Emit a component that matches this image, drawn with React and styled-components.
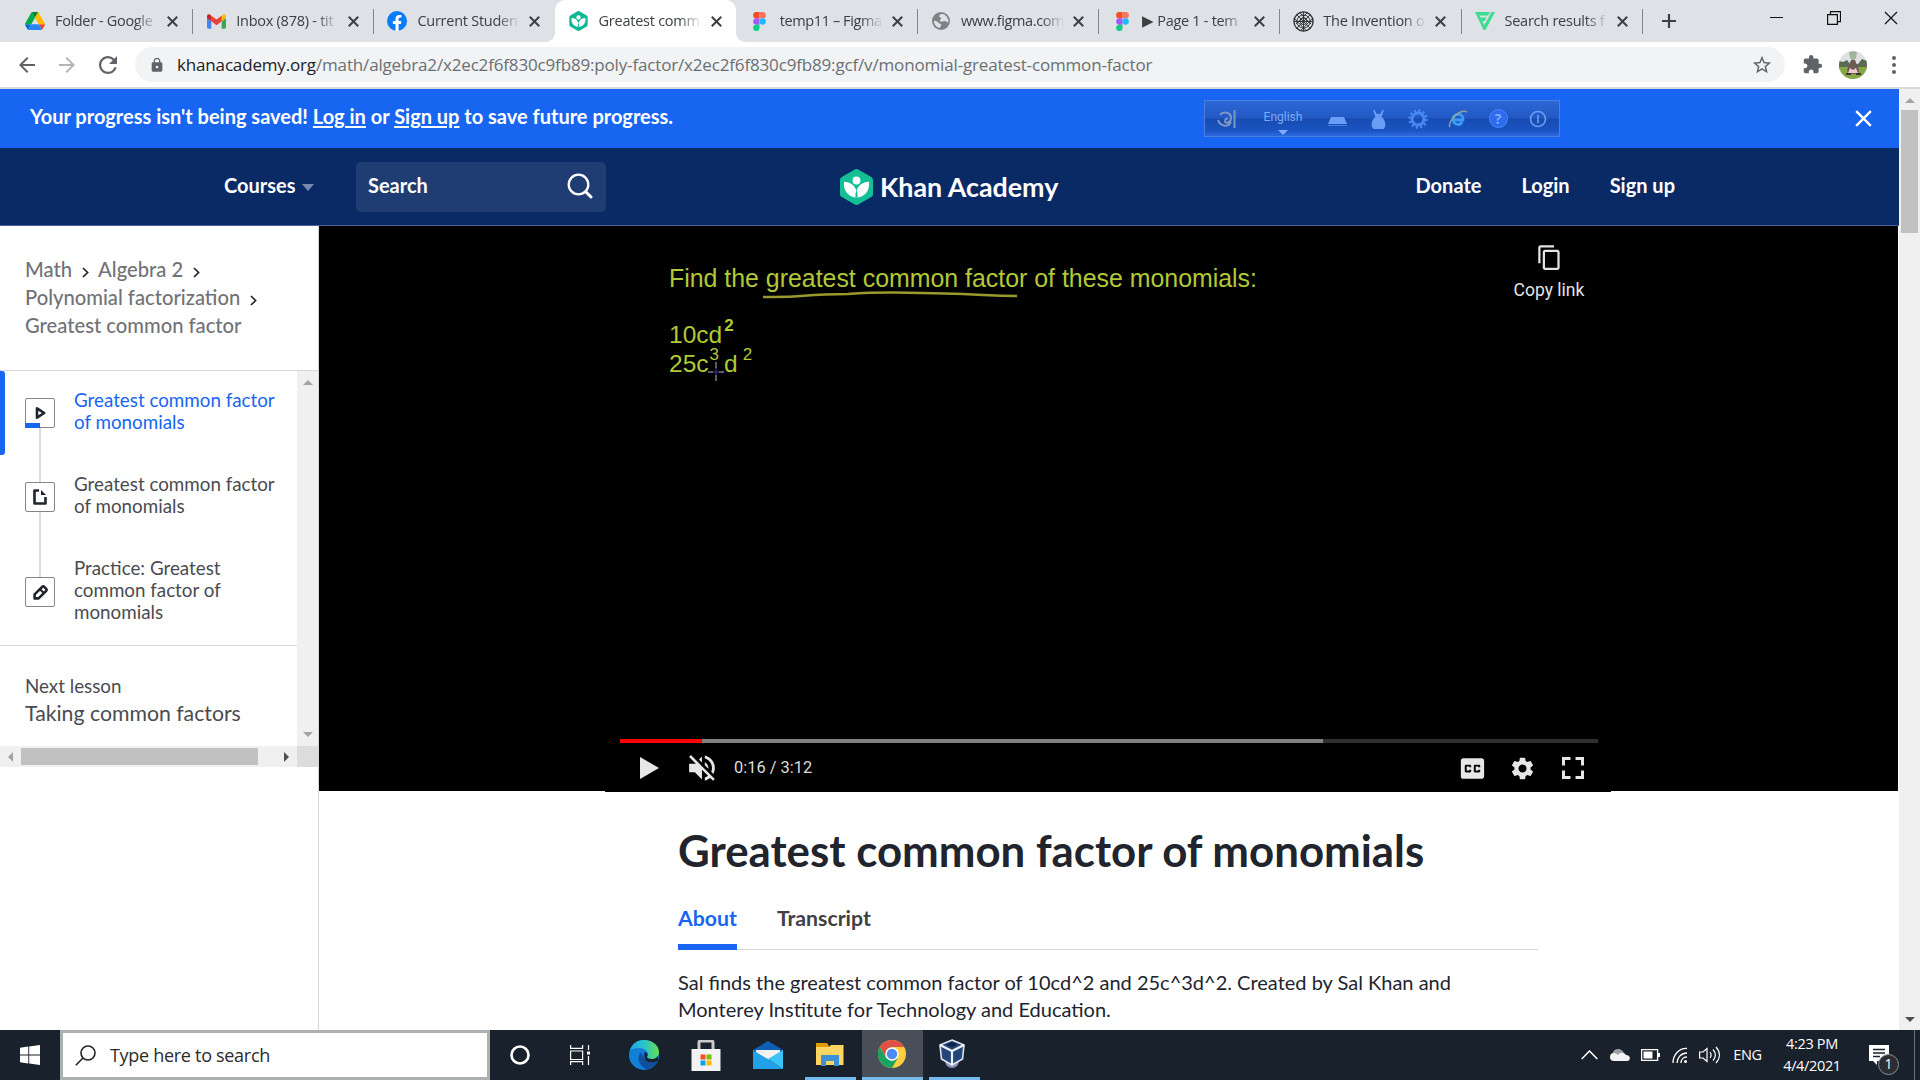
import React from "react";
import styled, { createGlobalStyle } from "styled-components";
import { MdStarBorder, MdExtension, MdOutlineContentCopy, MdClosedCaption, MdSettings, MdArrowBack, MdArrowForward, MdLock } from "react-icons/md";

const UI = '"Open Sans", "Noto Sans", sans-serif';
const LATO = 'Lato, "Open Sans", sans-serif';

const Global = createGlobalStyle`
  *, *::before, *::after { box-sizing: border-box; }
  html, body { margin: 0; padding: 0; background: #fff; }
  svg { display: block; flex: none; }
`;

const Screen = styled.div`
  width: 1920px;
  height: 1080px;
  display: flex;
  flex-direction: column;
  overflow: hidden;
  background: #fff;
  font-family: ${LATO};
  white-space: nowrap;
`;

/* ---------- browser ---------- */
const TabStrip = styled.div`
  height: 42px;
  flex: none;
  display: flex;
  background: #dee1e6;
  padding-left: 11px;
`;
const Tab = styled.div`
  width: 181.2px;
  height: 42px;
  padding: 0 14px 0 14px;
  display: flex;
  align-items: center;
  position: relative;
  background: ${(p) => (p.$active ? "#fff" : "transparent")};
  border-radius: ${(p) => (p.$active ? "10px 10px 0 0" : "0")};
  &::before {
    content: "";
    display: ${(p) => (p.$active ? "block" : "none")};
    position: absolute;
    left: -9px;
    right: -9px;
    bottom: 0;
    height: 9px;
    background:
      radial-gradient(circle at 0 0, transparent 8.5px, #fff 9px) left / 9px 9px no-repeat,
      radial-gradient(circle at 100% 0, transparent 8.5px, #fff 9px) right / 9px 9px no-repeat;
  }
  &::after {
    content: "";
    position: absolute;
    right: -1px;
    top: 9px;
    width: 1px;
    height: 25px;
    background: ${(p) => (p.$line ? "#80868b" : "transparent")};
  }
`;
const TabIcon = styled.div`
  width: 20px;
  height: 42px;
  display: flex;
  align-items: center;
  justify-content: center;
`;
const TabTitle = styled.div`
  width: 103px;
  margin: 0 9px 0 10px;
  overflow: hidden;
  font: 400 14.5px/42px ${UI};
  letter-spacing: ${(p) => p.$ls ?? -0.25}px;
  height: 42px;
  color: #3c4043;
  mask-image: linear-gradient(90deg, #000 78%, transparent 100%);
`;
const NewTab = styled.div`
  width: 54px;
  display: flex;
  align-items: center;
  justify-content: center;
`;
const WindowButtons = styled.div`
  margin-left: auto;
  padding: 11px 22px 0 0;
  display: flex;
  gap: 43px;
`;
const Toolbar = styled.div`
  height: 47px;
  flex: none;
  display: flex;
  align-items: center;
  border-bottom: 2px solid #d8dade;
  padding: 0 18px 0 15px;
  color: #5f6368;
`;
const NavIcons = styled.div`
  width: 120px;
  display: flex;
  gap: 16px;
`;
const ReloadBox = styled.div`
  padding: 3px 0 0 4px;
`;
const Omnibox = styled.div`
  width: 1650px;
  height: 35px;
  border-radius: 18px;
  background: #f1f3f4;
  display: flex;
  align-items: center;
  padding: 0 12px 0 14px;
`;
const Url = styled.div`
  flex: 1;
  margin-left: 12px;
  font: 400 17px/33px ${UI};
  letter-spacing: -0.16px;
  color: #6b6f73;
  b { font-weight: 400; color: #202124; }
`;
const Extensions = styled.div`
  margin-left: 17px;
`;
const Avatar = styled.div`
  width: 28px;
  height: 28px;
  border-radius: 50%;
  overflow: hidden;
  margin: 0 25px 0 16px;
`;

/* ---------- page ---------- */
const Viewport = styled.div`
  height: 941px;
  flex: none;
  display: flex;
`;
const Page = styled.div`
  width: 1899px;
  display: flex;
  flex-direction: column;
  overflow: hidden;
`;
const PageScroll = styled.div`
  width: 21px;
  background: #f0f0f0;
  display: flex;
  flex-direction: column;
  align-items: center;
  padding: 9px 0 8px;
`;
const PageThumb = styled.div`
  width: 17px;
  height: 123px;
  margin-top: 7px;
  background: #c1c1c1;
`;
const Arrow = styled.i`
  width: 0;
  height: 0;
  flex: none;
  border: 5px solid transparent;
  ${(p) => p.$dir === "up" && `border-top: 0; border-bottom-color: ${p.$c};`}
  ${(p) => p.$dir === "down" && `border-bottom: 0; border-top-color: ${p.$c};`}
  ${(p) => p.$dir === "left" && `border-left: 0; border-right-color: ${p.$c};`}
  ${(p) => p.$dir === "right" && `border-right: 0; border-left-color: ${p.$c};`}
  ${(p) => p.$push && "margin-top: auto;"}
`;
const Banner = styled.div`
  height: 59px;
  flex: none;
  background: #1865f2;
  color: #fff;
  display: flex;
  align-items: center;
  padding: 0 27px 0 30px;
`;
const BannerText = styled.div`
  width: 1174px;
  font: 700 20px/55px ${LATO};
  height: 59px;
  u { text-decoration-thickness: 2px; text-underline-offset: 2px; }
`;
const ImeBar = styled.div`
  width: 356px;
  height: 37px;
  margin-right: auto;
  border: 1px solid #4a7fe0;
  background: linear-gradient(#2b67d6 0%, #2259c4 48%, #164bb0 52%, #1b55c4 85%, #2b6ae0 100%);
  display: grid;
  grid-template-columns: 44px 68px 41px repeat(5, 40px);
  align-items: center;
  justify-items: center;
  color: #5f95f3;
`;
const ImeLang = styled.div`
  display: flex;
  flex-direction: column;
  align-items: center;
  gap: 3px;
  padding-top: 5px;
  font: 400 12px/20px Roboto, sans-serif;
  color: #7fabf8;
`;
const ImeHelp = styled.div`
  width: 19px;
  height: 19px;
  border-radius: 50%;
  background: #2c6bf0;
  border: 1px solid #4a86f5;
  color: #7eabf9;
  font: 700 14px/17px ${UI};
  text-align: center;
`;
const Header = styled.div`
  height: 78px;
  flex: none;
  background: #0a2a66;
  border-bottom: 1px solid #4a619b;
  display: flex;
  align-items: center;
  padding-left: 224px;
  color: #fff;
`;
const Courses = styled.div`
  width: 132px;
  display: flex;
  align-items: center;
  gap: 7px;
  margin-bottom: 4px;
  font: 700 20px/26px ${LATO};
`;
const Caret = styled.i`
  border: 6px solid transparent;
  border-top: 7px solid #7889ad;
  border-bottom: 0;
  margin-top: 6px;
`;
const SearchBox = styled.div`
  width: 250px;
  height: 50px;
  border-radius: 5px;
  background: #1f3c73;
  display: flex;
  align-items: center;
  justify-content: space-between;
  padding: 0 13px 4px 12px;
  font: 700 20px/26px ${LATO};
  svg { margin-top: 3px; }
`;
const Logo = styled.div`
  width: 220px;
  margin-left: 234px;
  display: flex;
  align-items: center;
  gap: 7px;
  font: 700 26.8px/36px ${LATO};
`;
const HeaderLinks = styled.nav`
  margin: 0 0 4px auto;
  padding-right: 224px;
  display: flex;
  gap: 40px;
  font: 700 20px/26px ${LATO};
`;
const Body = styled.div`
  flex: 1;
  display: flex;
  min-height: 0;
`;

/* ---------- sidebar ---------- */
const Sidebar = styled.aside`
  width: 319px;
  flex: none;
  border-right: 1px solid #d6d6d8;
  display: flex;
  flex-direction: column;
`;
const Crumbs = styled.div`
  height: 145px;
  flex: none;
  border-bottom: 1px solid #d6d6d8;
  padding: 29px 0 0 25px;
  font: 500 20.2px/28px ${LATO};
  color: #717278;
`;
const CrumbLine = styled.div`
  display: flex;
  align-items: center;
  height: 28px;
  svg { margin: 7px 9px 0 10px; }
`;
const ListFrame = styled.div`
  height: 375px;
  flex: none;
  display: flex;
`;
const List = styled.div`
  width: 297px;
`;
const VBar = styled.div`
  width: 21px;
  background: #f0f0f0;
  display: flex;
  flex-direction: column;
  align-items: center;
  padding: 9px 0;
`;
const HBar = styled.div`
  height: 21px;
  flex: none;
  display: flex;
  align-items: center;
  background: linear-gradient(90deg, #f0f0f0 297px, #dcdcdc 297px);
  padding-left: 8px;
`;
const HThumb = styled.div`
  width: 237px;
  height: 17px;
  background: #c1c1c1;
  margin: 0 26px 0 8px;
`;
const Lesson = styled.div`
  height: ${(p) => p.$h}px;
  display: flex;
  align-items: center;
  padding-left: 25px;
  position: relative;
  font: 400 18.8px/22px ${LATO};
  color: ${(p) => (p.$active ? "#1865f2" : "#4a4b50")};
  &::before {
    content: "";
    position: absolute;
    left: 0;
    top: 0;
    width: 5px;
    height: 84px;
    border-radius: 0 3px 3px 0;
    background: ${(p) => (p.$active ? "#1865f2" : "transparent")};
  }
  &::after {
    content: "";
    position: absolute;
    left: 39px;
    top: calc(50% + 15px);
    width: 2px;
    height: ${(p) => p.$link}px;
    background: #dcdcdd;
  }
`;
const LessonIcon = styled.div`
  width: 30px;
  height: 30px;
  border: 1px solid #85868b;
  border-radius: 2px;
  margin-right: 19px;
  display: flex;
  align-items: center;
  justify-content: center;
  position: relative;
  background: #fff;
`;
const Watched = styled.span`
  position: absolute;
  left: -1px;
  bottom: -1px;
  width: 15px;
  height: 5px;
  background: #1865f2;
`;
const LessonText = styled.div`
  padding-bottom: 4px;
`;
const NextLesson = styled.div`
  border-top: 1px solid #d6d6d8;
  padding: 28px 0 0 25px;
  color: #4a4b50;
  font: 400 18.8px/24px ${LATO};
  div { font-size: 21.25px; line-height: 30px; }
`;

/* ---------- main ---------- */
const Main = styled.main`
  flex: 1;
  display: flex;
  flex-direction: column;
`;
const Stage = styled.div`
  width: 1579px;
  height: 565px;
  flex: none;
  background: #000;
  padding-left: 286px;
`;
const Player = styled.div`
  width: 1006px;
  height: 566px;
  background: #000;
  display: flex;
  flex-direction: column;
  padding: 0 13px 0 15px;
  position: relative;
`;
const Board = styled.div`
  height: 513px;
  flex: none;
  padding: 39px 0 0 49px;
  color: #b1c936;
  font: 400 24.9px/26px "Liberation Sans", Arial, sans-serif;
`;
const Underline = styled.svg`
  margin: 0 0 0 94px;
`;
const Term = styled.div`
  display: flex;
  height: 29px;
  font-size: 24.5px;
  line-height: 29px;
  margin-top: ${(p) => p.$top || 0}px;
  sup { font-size: 17px; font-weight: ${(p) => (p.$bold ? 700 : 400)}; line-height: 12px; margin: 0 5px 0 1px; }
  sup + sup, span { margin-left: 0; }
  sup:last-child { margin-left: ${(p) => p.$gap || 2}px; }
`;
const Crosshair = styled.svg`
  position: absolute;
  left: 102px;
  top: 136px;
`;
const CopyLink = styled.div`
  position: absolute;
  left: 900px;
  top: 18px;
  width: 88px;
  display: flex;
  flex-direction: column;
  align-items: center;
  gap: 8px;
  color: #e4e4e4;
  font: 400 17.5px/22px Roboto, sans-serif;
`;
const Track = styled.div`
  height: 4px;
  flex: none;
  background: linear-gradient(90deg, #f00 82px, #808080 82px, #808080 703px, #303030 703px);
`;
const Controls = styled.div`
  height: 49px;
  display: flex;
  align-items: center;
  padding: 1px 14px 0 20px;
  color: #e6e6e6;
  font: 400 16.4px/24px Roboto, sans-serif;
`;
const MuteBox = styled.div`
  margin-left: 30px;
`;
const GearBox = styled.div`
  margin: 0 26px 0 21px;
`;
const Time = styled.span`
  margin: 0 auto 0 19px;
  color: #ddd;
`;
const Article = styled.div`
  width: 860px;
  margin: 29px 0 0 359px;
  color: #21242c;
`;
const Title = styled.h1`
  margin: 0;
  font: 700 43.8px/60px ${LATO};
`;
const Tabs = styled.div`
  display: flex;
  gap: 40px;
  height: 62px;
  margin-top: 8px;
  align-items: flex-end;
  border-bottom: 1px solid #d6d6d8;
`;
const PageTab = styled.div`
  height: 48px;
  margin-bottom: -1px;
  font: 700 21.25px/26px ${LATO};
  padding-top: 3px;
  color: ${(p) => (p.$active ? "#1865f2" : "#3f4046")};
  border-bottom: 6px solid ${(p) => (p.$active ? "#1865f2" : "transparent")};
`;
const Copy = styled.p`
  margin: 19px 0 0;
  font: 400 20px/27px ${LATO};
`;

/* ---------- taskbar ---------- */
const Taskbar = styled.div`
  height: 50px;
  flex: none;
  display: flex;
  background: #19212c;
  color: #fff;
`;
const Slot = styled.div`
  width: ${(p) => p.$w}px;
  height: 50px;
  flex: none;
  display: flex;
  align-items: center;
  justify-content: center;
  margin-right: ${(p) => p.$mr || 0}px;
  padding-right: ${(p) => p.$pr || 0}px;
  background: ${(p) => (p.$on ? "#484f58" : "transparent")};
  border-bottom: ${(p) => (p.$open ? "3px solid #76b9ed" : "0 solid")};
`;
const TaskSearch = styled.div`
  width: 430px;
  height: 50px;
  border: 3px solid #adb0b0;
  background: #fff;
  color: #2b2b2b;
  display: flex;
  align-items: center;
  gap: 14px;
  padding-left: 12px;
  font: 400 18px/24px ${UI};
  letter-spacing: -0.3px;
`;
const Tray = styled.div`
  margin-left: auto;
  display: flex;
  align-items: center;
  padding-right: 5px;
`;
const TrayItem = styled.div`
  margin-right: ${(p) => p.$mr}px;
`;
const TrayText = styled.div`
  width: ${(p) => p.$w}px;
  margin-right: ${(p) => p.$mr}px;
  text-align: center;
  font: 400 14.5px/22px ${UI};
  letter-spacing: -0.35px;
`;
const Lines = styled.div`
  display: flex;
  flex-direction: column;
`;
const Notice = styled.div`
  position: relative;
  width: 30px;
  height: 20px;
`;
const Badge = styled.span`
  position: absolute;
  left: 9px;
  top: 9px;
  width: 21px;
  height: 21px;
  border-radius: 50%;
  border: 1px solid #8d9094;
  background: #2b2d30;
  font: 400 14px/18px ${UI};
  text-align: center;
`;
const ShowDesktop = styled.div`
  width: 1px;
  height: 50px;
  background: #6b7078;
`;

/* ---------- drawings ---------- */
const Cross = ({ s = 10, w = 2, c = "#3c4043" }) => (
  <svg width={s} height={s} viewBox="0 0 10 10"><path d="M.7.7l8.6 8.6M9.3.7L.7 9.3" stroke={c} strokeWidth={(w * 10) / s} /></svg>
);
const KhanMark = ({ w, h, c = "#14bf96" }) => (
  <svg width={w} height={h} viewBox="0 0 33 36">
    <path d="M14.8.6a3.4 3.4 0 0 1 3.4 0L31.3 8.1a3.4 3.4 0 0 1 1.7 3v14a3.4 3.4 0 0 1-1.7 3L18.2 35.5a3.4 3.4 0 0 1-3.4 0L1.7 28.1a3.4 3.4 0 0 1-1.7-3v-14a3.4 3.4 0 0 1 1.7-3z" fill={c} />
    <circle cx="16.5" cy="11.5" r="3.9" fill="#fff" />
    <path d="M29 12.8v3c0 7.2-5.5 12.7-12.5 12.7S4 23 4 15.8v-3c6 0 10.8 3.5 12.5 9.2 1.7-5.7 6.500-9.200 12.500-9.200z" fill="#fff" />
    <path d="M16.500 21c-.9 2.200-1.200 4.600-1 7.500h2c.2-2.900-.1-5.300-1-7.500z" fill={c} />
  </svg>
);
const Drive = () => (
  <svg width="20" height="18" viewBox="0 0 87.3 78">
    <path d="m6.600 66.850 3.850 6.650c.8 1.400 1.950 2.500 3.300 3.300l13.750-23.800h-27.500c0 1.550.4 3.100 1.200 4.500z" fill="#0066da" />
    <path d="m43.650 25-13.750-23.800c-1.350.8-2.500 1.900-3.300 3.300l-25.400 44a9.060 9.060 0 0 0-1.200 4.500h27.500z" fill="#00ac47" />
    <path d="m73.550 76.800c1.350-.8 2.500-1.900 3.300-3.300l1.600-2.750 7.650-13.250c.8-1.400 1.200-2.950 1.200-4.500h-27.500l5.850 11.500z" fill="#ea4335" />
    <path d="m43.650 25 13.750-23.800c-1.350-.8-2.900-1.200-4.500-1.200h-18.500c-1.600 0-3.150.45-4.500 1.200z" fill="#00832d" />
    <path d="m59.800 53h-32.300l-13.750 23.800c1.350.8 2.900 1.200 4.500 1.200h50.800c1.600 0 3.150-.45 4.500-1.200z" fill="#2684fc" />
    <path d="m73.400 26.500-12.700-22c-.8-1.400-1.950-2.500-3.300-3.300l-13.750 23.800 16.150 28h27.450c0-1.550-.4-3.100-1.200-4.500z" fill="#ffba00" />
  </svg>
);
const Gmail = () => (
  <svg width="19" height="15" viewBox="52 42 88 66">
    <path fill="#4285f4" d="M58 108h14V74L52 59v43c0 3.320 2.690 6 6 6" />
    <path fill="#34a853" d="M120 108h14c3.320 0 6-2.690 6-6V59l-20 15" />
    <path fill="#fbbc04" d="M120 48v26l20-15v-8c0-7.420-8.470-11.650-14.400-7.200" />
    <path fill="#ea4335" d="M72 74V48l24 18 24-18v26L96 92" />
    <path fill="#c5221f" d="M52 51v8l20 15V48l-5.600-4.200c-5.940-4.450-14.400-.22-14.400 7.200" />
  </svg>
);
const Facebook = () => (
  <svg width="20" height="20" viewBox="0 0 24 24">
    <circle cx="12" cy="12" r="12" fill="#0a7cf5" />
    <path d="M16.700 15.500l.5-3.500h-3.300V9.800c0-1 .5-1.900 2-1.900h1.500v-3s-1.400-.2-2.700-.2c-2.700 0-4.500 1.700-4.500 4.700V12H7.100v3.500h3.100V24h3.700v-8.500z" fill="#fff" />
  </svg>
);
const Figma = () => (
  <svg width="13" height="19" viewBox="0 0 12 18">
    <path d="M3 0h3v6H3a3 3 0 0 1 0-6z" fill="#f24e1e" /><path d="M6 0h3a3 3 0 0 1 0 6H6z" fill="#ff7262" />
    <path d="M3 6h3v6H3a3 3 0 0 1 0-6z" fill="#a259ff" /><circle cx="9" cy="9" r="3" fill="#1abcfe" />
    <path d="M3 12h3v3a3 3 0 1 1-3-3z" fill="#0acf83" />
  </svg>
);
const Globe = () => (
  <svg width="18" height="18" viewBox="0 0 18 18">
    <circle cx="9" cy="9" r="9" fill="#7f8184" />
    <path d="M9.500 1.800c-1 1-2.500 1-2.300 2.600.2 1.200 2.200.8 2 2.200-.1 1.200-1.600 1-1.500 2.200.1 1 1.600.5 2.600.7 1.400.3 2.200-.8 3.400-.3.900.4 1.600 1.300 2.500 1.300A7.400 7.400 0 0 0 9.500 1.800z" fill="#dee1e6" />
    <path d="M1.800 8.800c1.700.1 3.500.4 4.300 1.600.7 1.100 2.500.8 3 2 .4 1.200-.9 1.700-1.200 3.700A7.300 7.300 0 0 1 1.800 8.800z" fill="#dee1e6" />
  </svg>
);
const Lattice = () => (
  <svg width="21" height="21" viewBox="0 0 21 21" fill="none" stroke="#2d2f31">
    <circle cx="10.500" cy="10.500" r="9.600" strokeWidth="1.300" />
    <g strokeWidth=".9"><path d="M10.500 1v19M1 10.500h19M3.800 3.800l13.400 13.400M17.200 3.800L3.800 17.200M6.800 1.700l11.400 11.400M14.200 1.700L2.800 13.100M1.700 7.800l11 11.200M19.300 7.800l-11 11.200" /><circle cx="10.500" cy="10.500" r="6.600" /><circle cx="10.500" cy="10.500" r="3.200" /></g>
  </svg>
);
const GreenTri = () => (
  <svg width="20" height="18" viewBox="0 0 20 18" fill="#3ddc91">
    <path d="M0 0h15l-2 3.500H4.500l1 2h6L9.800 9H7.300l2 4L16.500 0H20L10.500 18H8.500z" />
  </svg>
);
const Reload = () => (
  <svg width="18" height="18" viewBox="4 4 16 16"><path fill="#5f6368" d="M17.650 6.350A7.958 7.958 0 0 0 12 4c-4.420 0-7.990 3.580-7.990 8s3.570 8 7.990 8c3.730 0 6.840-2.550 7.730-6h-2.080A5.990 5.990 0 0 1 12 18c-3.310 0-6-2.690-6-6s2.690-6 6-6c1.660 0 3.140.69 4.220 1.780L13 11h7V4z" /></svg>
);
const HikerPhoto = () => (
  <svg width="28" height="28" viewBox="0 0 28 28">
    <rect width="28" height="28" fill="#dde1e4" /><path d="M0 10l4 1 4-2 3 4h8l4-5 5 2v8H0z" fill="#5b6a55" />
    <path d="M10 1l4-1 4 1-1 6-3 3-3-3z" fill="#a3b39d" /><path d="M0 16h28v12H0z" fill="#86a743" />
    <path d="M12 9h4l4 10-1 4H9l-1-4z" fill="#6d5a55" /><path d="M11 17l3 2 3-2 2 5H9z" fill="#ecc9cd" /><path d="M7 22h5v2H7zM17 22h5v2h-5z" fill="#3a3434" />
  </svg>
);
const Magnifier = () => (
  <svg width="26" height="26" viewBox="0 0 26 26" fill="none" stroke="#fff" strokeLinecap="round">
    <circle cx="11.500" cy="11.500" r="9.800" strokeWidth="2.300" /><path d="M19 19l5 5" strokeWidth="3" />
  </svg>
);
const Chevron = () => (
  <svg width="7" height="11" viewBox="0 0 7 11" fill="none" stroke="#21242c" strokeWidth="1.700"><path d="M1 1l4.600 4.500L1 10" /></svg>
);
const PlayMini = () => (
  <svg width="14" height="14" viewBox="-2 0 14 14" fill="none"><path d="M2 2.300v9.400L9.200 7z" stroke="#21242c" strokeWidth="2.600" strokeLinejoin="round" /></svg>
);
const DocMini = () => (
  <svg width="14" height="16" viewBox="0 0 14 16" fill="none"><path d="M6 1.500H1.500v13h11V8" stroke="#21242c" strokeWidth="2.600" strokeLinejoin="round" /><path d="M8 1l5 5H8z" fill="#21242c" /></svg>
);
const PencilMini = () => (
  <svg width="15" height="15" viewBox="0 0 15 15" fill="none"><path d="M1.600 13.400v-4L9.200 1.800q1-.8 2 0l2 2q.8 1 0 2L5.600 13.400z" stroke="#21242c" strokeWidth="2.600" strokeLinejoin="round" /><path d="M7 4.200l4 4" stroke="#21242c" strokeWidth="2.200" /></svg>
);
const Muted = () => (
  <svg width="26" height="26" viewBox="7.9 8.9 18.2 18.2" fill="#e6e6e6"><path d="m 21.480,17.980 c 0,-1.770 -1.020,-3.290 -2.500,-4.030 v 2.210 l 2.450,2.450 c .03,-0.200 .05,-0.410 .05,-0.630 z m 2.500,0 c 0,.94 -0.200,1.820 -0.540,2.640 l 1.510,1.510 c .66,-1.240 1.030,-2.650 1.030,-4.150 0,-4.280 -2.990,-7.860 -7,-8.760 v 2.050 c 2.890,.86 5,3.540 5,6.710 z M 9.250,8.980 l -1.270,1.260 4.720,4.730 H 7.980 v 6 H 11.980 l 5,5 v -6.730 l 4.250,4.250 c -0.670,.52 -1.420,.93 -2.250,1.180 v 2.060 c 1.380,-0.310 2.630,-0.950 3.690,-1.810 l 2.040,2.050 1.270,-1.270 -9,-9 -7.720,-7.720 z m 7.720,.99 -2.090,2.080 2.090,2.090 V 9.980 z" /></svg>
);
const PlayBig = () => (<svg width="19" height="22" viewBox="0 0 19 22"><path d="M0 0l19 11L0 22z" fill="#e6e6e6" /></svg>);
const Fullscreen = () => (
  <svg width="22" height="22" viewBox="0 0 22 22" fill="none" stroke="#e6e6e6" strokeWidth="3"><path d="M1.500 8.500v-7h7M13.500 1.500h7v7M20.500 13.500v7h-7M8.500 20.500h-7v-7" /></svg>
);

const tabs = [
  { icon: <Drive />, title: "Folder - Google", line: 1, ls: -0.35 },
  { icon: <Gmail />, title: "Inbox (878) - tit", line: 1 },
  { icon: <Facebook />, title: "Current Studen" },
  { icon: <KhanMark w={19} h={20} c="#0fb893" />, title: "Greatest comm", active: 1 },
  { icon: <Figma />, title: "temp11 – Figma", line: 1, ls: -0.4 },
  { icon: <Globe />, title: "www.figma.com", line: 1, ls: -0.4 },
  { icon: <Figma />, title: "▶ Page 1 - tem", line: 1, ls: -0.3 },
  { icon: <Lattice />, title: "The Invention o", line: 1 },
  { icon: <GreenTri />, title: "Search results f", line: 1 },
];

function Browser() {
  return (
    <>
      <TabStrip>
        {tabs.map((t, i) => (
          <Tab key={i} $active={t.active} $line={t.line}>
            <TabIcon>{t.icon}</TabIcon>
            <TabTitle $ls={t.ls}>{t.title}</TabTitle>
            <Cross s={11} w={2} />
          </Tab>
        ))}
        <NewTab><svg width="16" height="16" viewBox="0 0 16 16"><path d="M8 1v14M1 8h14" stroke="#3c4043" strokeWidth="2.200" /></svg></NewTab>
        <WindowButtons>
          <svg width="14" height="14" viewBox="0 0 14 14"><path d="M0 6.500h13" stroke="#111" /></svg>
          <svg width="14" height="14" viewBox="0 0 14 14" fill="none" stroke="#111" strokeWidth="1.200"><path d="M.6 3.600h9.800v9.800H.6zM3.500 3.500V.6h10v10h-3" /></svg>
          <Cross s={14} w={1.2} c="#111" />
        </WindowButtons>
      </TabStrip>
      <Toolbar>
        <NavIcons>
          <MdArrowBack size={24} />
          <MdArrowForward size={24} color="#b4b6b9" />
          <ReloadBox><Reload /></ReloadBox>
        </NavIcons>
        <Omnibox>
          <MdLock size={16} />
          <Url><b>khanacademy.org</b>/math/algebra2/x2ec2f6f830c9fb89:poly-factor/x2ec2f6f830c9fb89:gcf/v/monomial-greatest-common-factor</Url>
          <MdStarBorder size={22} />
        </Omnibox>
        <Extensions><MdExtension size={21} /></Extensions>
        <Avatar><HikerPhoto /></Avatar>
        <svg width="4" height="18" viewBox="0 0 4 18" fill="#5f6368"><circle cx="2" cy="2" r="2" /><circle cx="2" cy="9" r="2" /><circle cx="2" cy="16" r="2" /></svg>
      </Toolbar>
    </>
  );
}

function Ime() {
  return (
    <ImeBar>
      <svg width="20" height="20" viewBox="0 0 20 20" fill="none" stroke="#7d97c4" strokeWidth="2"><path d="M17.500 1v18M3 6c3-4 11-3 11 3 0 5-6 6-6 3 0-2 2-3 3-2M1 11c2 6 10 8 13 2" /></svg>
      <ImeLang>English<Arrow $dir="down" $c="#7fabf8" /></ImeLang>
      <svg width="19" height="20" viewBox="0 0 19 20" fill="#6a9df5"><path d="M3 8h13l3 7H0z" /><path d="M0 16h19v1H0z" opacity=".6" /></svg>
      <svg width="15" height="20" viewBox="0 0 15 20" fill="#6a9df5"><path d="M2 1h1.500l2.300 4h3.400l2.300-4H13l-2.500 7c3 2 4.500 6 3.500 10l-1.500 2h-10L1 18c-1-4 .5-8 3.500-10z" /></svg>
      <svg width="20" height="20" viewBox="0 0 20 20" fill="none" stroke="#4788f4"><circle cx="10" cy="10" r="6" strokeWidth="3" /><circle cx="10" cy="10" r="8.500" strokeWidth="2.500" strokeDasharray="2.200 2.250" /></svg>
      <svg width="20" height="20" viewBox="0 0 20 20" fill="none"><path d="M5 11h10c1-7-9-8-10-1 0 6 7 7 9 3" stroke="#3c9bf7" strokeWidth="2.800" /><path d="M2 18C-1 13 12-1 19 3" stroke="#8fa694" strokeWidth="1.500" /></svg>
      <ImeHelp>?</ImeHelp>
      <svg width="18" height="18" viewBox="0 0 18 18" fill="none" stroke="#6f9ff2" strokeWidth="1.600"><circle cx="9" cy="9" r="7.500" /><path d="M9 5v8" /></svg>
    </ImeBar>
  );
}

function SidePanel() {
  return (
    <Sidebar>
      <Crumbs>
        <CrumbLine>Math<Chevron />Algebra 2<Chevron /></CrumbLine>
        <CrumbLine>Polynomial factorization<Chevron /></CrumbLine>
        <CrumbLine>Greatest common factor</CrumbLine>
      </Crumbs>
      <ListFrame>
        <List>
          <Lesson $h={84} $link={54} $active><LessonIcon><PlayMini /><Watched /></LessonIcon><LessonText>Greatest common factor<br />of monomials</LessonText></Lesson>
          <Lesson $h={84} $link={65}><LessonIcon><DocMini /></LessonIcon><LessonText>Greatest common factor<br />of monomials</LessonText></Lesson>
          <Lesson $h={106} $link={0}><LessonIcon><PencilMini /></LessonIcon><LessonText>Practice: Greatest<br />common factor of<br />monomials</LessonText></Lesson>
          <NextLesson>Next lesson<div>Taking common factors</div></NextLesson>
        </List>
        <VBar><Arrow $dir="up" $c="#a3a3a3" /><Arrow $dir="down" $c="#a3a3a3" $push /></VBar>
      </ListFrame>
      <HBar><Arrow $dir="left" $c="#a3a3a3" /><HThumb /><Arrow $dir="right" $c="#505050" /></HBar>
    </Sidebar>
  );
}

function Video() {
  return (
    <Stage>
      <Player>
        <Board>
          Find the greatest common factor of these monomials:
          <Underline width="254" height="8" viewBox="0 0 254 8" fill="none"><path d="M0 6c45 1 35-3 85-3 45-3 55-1 115 0 25 1 30 2 54 2" stroke="#9a9a2c" strokeWidth="2.500" /></Underline>
          <Term $top={21} $bold>10cd<sup>2</sup></Term>
          <Term $gap={5}>25c<sup>3</sup><span>d</span><sup>2</sup></Term>
          <Crosshair width="18" height="20" viewBox="0 0 18 20" stroke="#77798a" strokeWidth="1.500"><path d="M9 0v6M9 13v6M1 10h5M12 10h5" /><path d="M9 6v7M6 10h6" stroke="#2c2a6a" /></Crosshair>
        </Board>
        <CopyLink><MdOutlineContentCopy size={27} />Copy link</CopyLink>
        <Track />
        <Controls>
          <PlayBig />
          <MuteBox><Muted /></MuteBox>
          <Time>0:16 / 3:12</Time>
          <MdClosedCaption size={31} />
          <GearBox><MdSettings size={27} /></GearBox>
          <Fullscreen />
        </Controls>
      </Player>
    </Stage>
  );
}

function TaskIcons() {
  return (
    <>
      <Slot $w={60}><svg width="20" height="20" viewBox="0 0 20 20" fill="#fff"><path d="M0 2.800L8.300 1.600v8H0zM9.200 1.500L20 0v9.600H9.200zM0 10.400h8.300v8L0 17.200zM9.200 10.400H20V20L9.200 18.500z" /></svg></Slot>
      <TaskSearch>
        <svg width="21" height="21" viewBox="0 0 21 21" fill="none" stroke="#222" strokeWidth="1.600"><circle cx="13" cy="8" r="7" /><path d="M8 13L.8 20.200" /></svg>
        Type here to search
      </TaskSearch>
      <Slot $w={60}><svg width="20" height="20" viewBox="0 0 20 20"><circle cx="10" cy="10" r="8.500" fill="none" stroke="#fff" strokeWidth="2.600" /></svg></Slot>
      <Slot $w={60} $mr={4}><svg width="20" height="20" viewBox="0 0 20 20" fill="none" stroke="#fff" strokeWidth="1.200"><path d="M.6 0v3.400h12V0M.6 6h12v8.500H.6zM.6 20v-3.400h12V20M18.500 0v5M18.500 11v9" /><path d="M17 6.500h3v3h-3z" fill="#fff" stroke="none" /></svg></Slot>
      <Slot $w={60} $mr={2}>
        <svg width="30" height="30" viewBox="0 0 30 30">
          <defs>
            <linearGradient id="edgeTop" x1="0" x2="1"><stop offset="0" stopColor="#1fa7e8" /><stop offset=".5" stopColor="#2cc4c9" /><stop offset="1" stopColor="#63e04b" /></linearGradient>
          </defs>
          <circle cx="15" cy="15" r="15" fill="#1180d6" />
          <path d="M1 10C4 2 10 0 15 0c9 0 15 6 15 12 0 5-4 7-7 7-3 0-5-1-5-2 0-1 1-1 1-3 0-3-4-6-9-6-4 0-7 1-9 2z" fill="url(#edgeTop)" />
          <path d="M12 12c-5 5-2 15 6 17 5-1 9-5 11-8-5 3-10 2-13-1-2-2-3-5-4-8z" fill="#0f4f9e" />
          <path d="M16 12c3 1 3 3 2 5 0 1 2 2 5 2 2 0 4-.5 6-3v5c-4 3-10 2-13-1-2-2-2-6 0-8z" fill="#19212c" />
          <path d="M16 12c-2 2-2 6 0 8 3 3 8 3 12 1 .5 0 .5.5.3.8C26 26 21 29 17 28z" fill="#0f4f9e" />
        </svg>
      </Slot>
      <Slot $w={60} $mr={2} $pr={1}>
        <svg width="30" height="31" viewBox="0 0 30 31"><path d="M8 10V2.500q0-1.500 1.500-1.500h11q1.500 0 1.500 1.500V10" fill="none" stroke="#c9c9c9" strokeWidth="3" /><path d="M.5 9h29v22h-29z" fill="#f3f3f3" /><path d="M9.500 14.500h5v5h-5z" fill="#f25022" /><path d="M15.500 14.500h5v5h-5z" fill="#7fba00" /><path d="M9.500 20.500h5v5h-5z" fill="#00a4ef" /><path d="M15.500 20.500h5v5h-5z" fill="#ffb900" /></svg>
      </Slot>
      <Slot $w={60} $mr={7}>
        <svg width="30" height="28" viewBox="0 0 30 28"><path d="M0 9L15 0l15 9v4H0z" fill="#0c5fb2" /><path d="M3 9h24v10H3z" fill="#f4f2f0" /><path d="M0 9l15 10L30 28H0z" fill="#1a9be6" /><path d="M30 9L15 18l15 10z" fill="#3cc4f5" /><path d="M0 28V10l15 8 15 10z" fill="#22a1e8" /></svg>
      </Slot>
      <Slot $w={51} $mr={6} $pr={1} $open>
        <svg width="28" height="24" viewBox="0 0 28 24"><path d="M0 1h11l2 3v3H0z" fill="#e09b00" /><path d="M0 5h13l2-2h12.500v20H0z" fill="#ffd562" /><path d="M5 24V13h18v11h-5v-5h-8v5z" fill="#3d92d6" /></svg>
      </Slot>
      <Slot $w={61} $mr={6} $pr={2} $open $on>
        <svg width="28" height="28" viewBox="0 0 48 48">
          <circle cx="24" cy="24" r="24" fill="#ffcd40" /><path d="M3.200 12A24 24 0 0 1 44.800 12H24L13.600 30z" fill="#de5246" />
          <path d="M3.200 12A24 24 0 0 0 24 48l10.400-18L24 36l-10.400-6z" fill="#1aa260" />
          <circle cx="24" cy="24" r="11.500" fill="#fff" /><circle cx="24" cy="24" r="9" fill="#4c8bf5" />
        </svg>
      </Slot>
      <Slot $w={51} $pr={6} $open>
        <svg width="26" height="30" viewBox="0 0 26 30"><path d="M6 21c0 5 3 8 7 8s7-3 7-8z" fill="#8a93b8" /><path d="M13 1l12 5-1.500 14L13 26 2.500 20 1 6z" fill="#24467a" stroke="#dfe5ee" strokeWidth="1.600" /><path d="M1 6l12 6 12-6M13 12v14" stroke="#eef2f7" strokeWidth="2.200" fill="none" /><path d="M7 5.500L13 3l6 2.500L13 8.500z" fill="#0f2344" /></svg>
      </Slot>
    </>
  );
}

function SystemTray() {
  return (
    <Tray>
      <TrayItem $mr={12}><svg width="17" height="10" viewBox="0 0 17 10" fill="none" stroke="#fff" strokeWidth="1.500"><path d="M.7 9l7.800-8 7.800 8" /></svg></TrayItem>
      <TrayItem $mr={11}><svg width="20" height="14" viewBox="0 0 20 14"><path d="M3 8a5 5 0 0 1 5-7c3 0 5 2 6 4l-6 6z" fill="#9a9ea4" /><path d="M4 13a4 4 0 0 1 0-8c2 0 3 1 4 2 2-3 6-3 8 0 5 0 5 6 1 6z" fill="#f2f2f2" /></svg></TrayItem>
      <TrayItem $mr={12}><svg width="19" height="12" viewBox="0 0 19 12"><path d="M.6.6h16v10.800H.6z" fill="none" stroke="#fff" strokeWidth="1.300" /><path d="M2.500 2.500h9v7h-9zM17 4h2v4h-2z" fill="#fff" /></svg></TrayItem>
      <TrayItem $mr={11}><svg width="16" height="17" viewBox="0 0 16 17" fill="none" stroke="#fff" strokeWidth="1.300"><path d="M1 16C1 8 7 1 15 1.500M5 16c0-5 4-10 10-10M9 16c0-3 2-6 6-6" /><circle cx="13.500" cy="14.500" r="1.500" fill="#fff" stroke="none" /></svg></TrayItem>
      <TrayItem $mr={12}><svg width="21" height="20" viewBox="0 0 21 20" fill="none" stroke="#fff" strokeWidth="1.200"><path d="M.6 7H4l4-3.500v13L4 13H.6zM11 7c1.500 2 1.500 4 0 6M14 4.500c3 3.500 3 7.500 0 11M17 2c4.500 5 4.500 11 0 16" /></svg></TrayItem>
      <TrayText $w={31} $mr={17}>ENG</TrayText>
      <TrayText $w={64} $mr={25}><Lines><span>4:23 PM</span><span>4/4/2021</span></Lines></TrayText>
      <TrayItem $mr={15}>
        <Notice>
          <svg width="20" height="20" viewBox="0 0 20 20"><path d="M0 0h20v16H8v4l-4-4H0z" fill="#fff" /><path d="M4 4.500h12M4 8h12M4 11.500h7" stroke="#19212c" strokeWidth="1.300" /></svg>
          <Badge>1</Badge>
        </Notice>
      </TrayItem>
      <ShowDesktop />
    </Tray>
  );
}

export default function App() {
  return (
    <Screen>
      <Global />
      <Browser />
      <Viewport>
        <Page>
          <Banner>
            <BannerText>Your progress isn't being saved! <u>Log in</u> or <u>Sign up</u> to save future progress.</BannerText>
            <Ime />
            <Cross s={17} w={2.4} c="#fff" />
          </Banner>
          <Header>
            <Courses>Courses<Caret /></Courses>
            <SearchBox>Search<Magnifier /></SearchBox>
            <Logo><KhanMark w={33} h={36} />Khan Academy</Logo>
            <HeaderLinks><span>Donate</span><span>Login</span><span>Sign up</span></HeaderLinks>
          </Header>
          <Body>
            <SidePanel />
            <Main>
              <Video />
              <Article>
                <Title>Greatest common factor of monomials</Title>
                <Tabs><PageTab $active>About</PageTab><PageTab>Transcript</PageTab></Tabs>
                <Copy>Sal finds the greatest common factor of 10cd^2 and 25c^3d^2. Created by Sal Khan and<br />Monterey Institute for Technology and Education.</Copy>
              </Article>
            </Main>
          </Body>
        </Page>
        <PageScroll><Arrow $dir="up" $c="#a3a3a3" /><PageThumb /><Arrow $dir="down" $c="#505050" $push /></PageScroll>
      </Viewport>
      <Taskbar>
        <TaskIcons />
        <SystemTray />
      </Taskbar>
    </Screen>
  );
}
